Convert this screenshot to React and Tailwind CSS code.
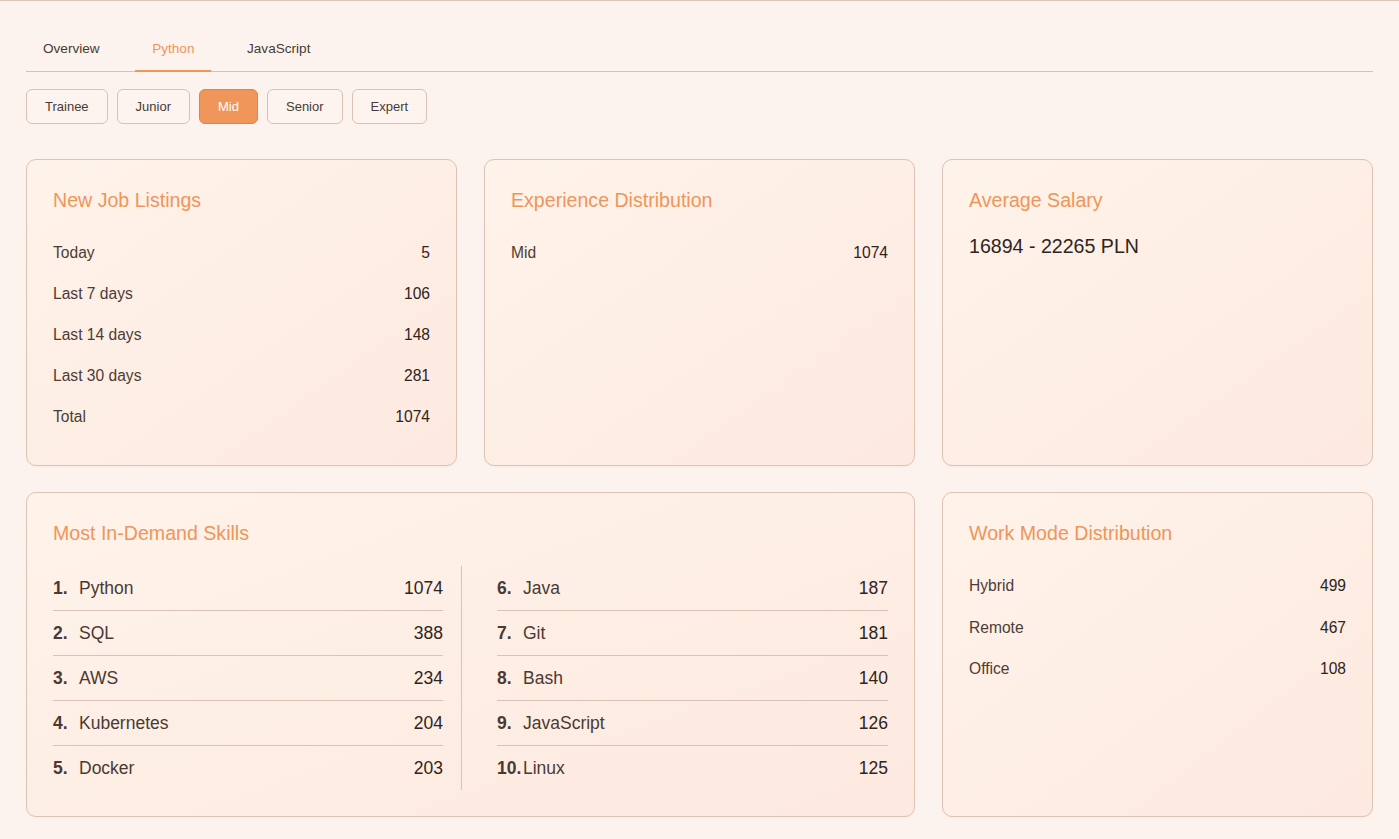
import React from "react";

const jobRows = [
  ["Today", "5"],
  ["Last 7 days", "106"],
  ["Last 14 days", "148"],
  ["Last 30 days", "281"],
  ["Total", "1074"],
];

const skillsLeft = [
  ["1.", "Python", "1074"],
  ["2.", "SQL", "388"],
  ["3.", "AWS", "234"],
  ["4.", "Kubernetes", "204"],
  ["5.", "Docker", "203"],
];
const skillsRight = [
  ["6.", "Java", "187"],
  ["7.", "Git", "181"],
  ["8.", "Bash", "140"],
  ["9.", "JavaScript", "126"],
  ["10.", "Linux", "125"],
];

const workRows = [
  ["Hybrid", "499"],
  ["Remote", "467"],
  ["Office", "108"],
];

function Card({ title, children, className = "", titleClass = "mb-[18px]" }) {
  return (
    <div
      className={
        "rounded-[10px] border border-[#dcc3b3] bg-gradient-to-br from-[#fef3ea] to-[#fde9df] pt-[26px] px-[26px] pb-[28px] shadow-[0_1px_2px_rgba(120,70,40,0.05)] " +
        className
      }
    >
      <h2 className={"text-[19.6px] leading-[28px] text-[#f0955a] font-normal " + titleClass}>{title}</h2>
      {children}
    </div>
  );
}

function StatRow({ label, value, h = "h-[41px]" }) {
  return (
    <div className={"flex items-center justify-between text-[15.6px] " + h}>
      <span className="text-[#4d3c35]">{label}</span>
      <span className="text-[#2f2420]">{value}</span>
    </div>
  );
}

function SkillList({ items }) {
  return (
    <div className="flex flex-col">
      {items.map(([n, name, v], i) => (
        <div
          key={name}
          className={
            "flex items-center justify-between py-[10px] text-[17.5px] leading-[24px] " +
            (i < items.length - 1 ? "border-b border-[#d8c3b6]" : "")
          }
        >
          <div className="flex items-center">
            <span className="w-[26px] font-bold text-[#4a3a33]">{n}</span>
            <span className="text-[#4a3a33]">{name}</span>
          </div>
          <span className="text-[#2f2420]">{v}</span>
        </div>
      ))}
    </div>
  );
}

export default function App() {
  const levels = ["Trainee", "Junior", "Mid", "Senior", "Expert"];
  const tabs = ["Overview", "Python", "JavaScript"];
  return (
    <div className="min-h-screen border-t border-[#dcc3b3] bg-[#fdf3ee] px-[26px] pt-[25px] pb-6 font-['Liberation_Sans',Arial,sans-serif]">
      <div className="flex gap-[18.5px] border-b border-[#d9c2b4]">
        {tabs.map((t) => (
          <div
            key={t}
            className={
              "-mb-px px-[17px] pt-[13px] pb-[11px] text-[13.6px] leading-[20px] border-b-2 " +
              (t === "Python"
                ? "border-[#f0955a] text-[#f0955a]"
                : "border-transparent text-[#4a3a33]")
            }
          >
            {t}
          </div>
        ))}
      </div>

      <div className="mt-[17px] flex gap-[9px]">
        {levels.map((l) => (
          <button
            key={l}
            className={
              "h-[35px] rounded-[6px] border px-[18px] text-[13px] " +
              (l === "Mid"
                ? "border-[#e8803f] bg-[#f0965a] text-white"
                : "border-[#d9c2b4] bg-[#fdf4ef] text-[#4a3a33]")
            }
          >
            {l}
          </button>
        ))}
      </div>

      <div className="mt-[35px] grid grid-cols-3 gap-x-[27px] gap-y-[26px]">
        <Card title="New Job Listings">
          {jobRows.map(([l, v]) => (
            <StatRow key={l} label={l} value={v} />
          ))}
        </Card>
        <Card title="Experience Distribution">
          <StatRow label="Mid" value="1074" />
        </Card>
        <Card title="Average Salary">
          <div className="text-[19.6px] leading-[28px] text-[#2f2420]">16894 - 22265 PLN</div>
        </Card>

        <Card title="Most In-Demand Skills" className="col-span-2 !pb-[26px]" titleClass="mb-[19px]">
          <div className="flex">
            <div className="w-[409px] shrink-0 border-r border-[#d8c3b6] pr-[18px]">
              <SkillList items={skillsLeft} />
            </div>
            <div className="flex-1 pl-[35px]">
              <SkillList items={skillsRight} />
            </div>
          </div>
        </Card>
        <Card title="Work Mode Distribution">
          <div className="mt-[1px]">
            {workRows.map(([l, v]) => (
              <StatRow key={l} label={l} value={v} h="h-[41.5px]" />
            ))}
          </div>
        </Card>
      </div>
    </div>
  );
}
